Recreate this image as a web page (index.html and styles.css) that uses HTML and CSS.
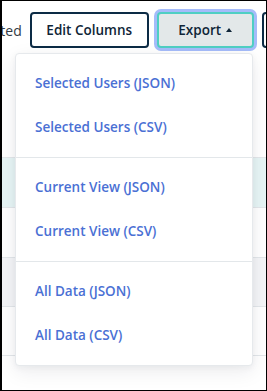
FILE: index.html
```html
<!DOCTYPE html>
<html lang="en">
<head>
<meta charset="utf-8">
<title>Export menu</title>
<link rel="stylesheet" href="styles.css">
</head>
<body>
<div class="page">
  <div class="toolbar">
    <span class="selected-count">2 Selected</span>
    <button class="btn btn-outline">Edit Columns</button>
    <button class="btn btn-export">Export <span class="caret"></span></button>
    <button class="btn btn-outline btn-next">More</button>
  </div>
  <div class="table">
    <div class="table-head"></div>
    <div class="row row-selected"></div>
    <div class="row"></div>
    <div class="row row-alt row-short"></div>
    <div class="row row-short"></div>
  </div>
  <div class="menu">
    <div class="menu-section">
      <a class="menu-item">Selected Users (JSON)</a>
      <a class="menu-item">Selected Users (CSV)</a>
    </div>
    <div class="menu-section">
      <a class="menu-item">Current View (JSON)</a>
      <a class="menu-item">Current View (CSV)</a>
    </div>
    <div class="menu-section">
      <a class="menu-item">All Data (JSON)</a>
      <a class="menu-item">All Data (CSV)</a>
    </div>
  </div>
</div>
<div class="frame"></div>
</body>
</html>
```
FILE: styles.css
```css
* { box-sizing: border-box; }
html, body {
  margin: 0;
  padding: 0;
  width: 267px;
  height: 391px;
  overflow: hidden;
  background: #fff;
  font-family: "Open Sans", "Noto Sans", sans-serif;
}
.page {
  position: relative;
  width: 267px;
  height: 391px;
  overflow: hidden;
}
.toolbar {
  display: flex;
  align-items: center;
  gap: 8px;
  margin-left: -45px;
  padding-top: 12px;
  height: 48px;
  white-space: nowrap;
}
.selected-count {
  font-size: 14px;
  color: #333b45;
  flex: none;
}
.btn {
  flex: none;
  height: 36px;
  border-radius: 4px;
  font-family: inherit;
  font-size: 13.5px;
  font-weight: 600;
  color: #0f2537;
  background: #fff;
  padding: 0 16px;
  display: flex;
  align-items: center;
  justify-content: center;
  cursor: pointer;
}
.btn-outline {
  border: 2px solid #0c2b45;
  width: 119px;
}
.btn-export {
  width: 97px;
  background: #e3e8e9;
  border: 2px solid #4fcfc3;
  box-shadow: 0 0 0 3px #a5bcfa;
  gap: 5px;
}
.caret {
  width: 0;
  height: 0;
  border-left: 3.5px solid transparent;
  border-right: 3.5px solid transparent;
  border-bottom: 4px solid #0f2537;
  margin-top: -1px;
}
.table-head {
  height: 110px;
  border-bottom: 1px solid #e3e7ea;
}
.row {
  height: 50px;
  border-bottom: 1px solid #e3e7ea;
  background: #fff;
}
.row-short { height: 49px; }
.row-selected { background: #e7f5f5; }
.row-alt { background: #f4f5f7; }

.menu {
  position: absolute;
  left: 15px;
  top: 53px;
  width: 238px;
  background: #fff;
  border: 1px solid #e6e9ec;
  border-radius: 4px;
  box-shadow: 0 6px 20px rgba(20, 30, 50, 0.08), 0 2px 6px rgba(20, 30, 50, 0.05);
  display: flex;
  flex-direction: column;
}
.menu-section {
  display: flex;
  flex-direction: column;
  padding: 7px 0 8px;
  border-bottom: 1px solid #e3e7ea;
}
.menu-section:last-child { border-bottom: none; padding-bottom: 8px; }
.menu-item {
  height: 44px;
  display: flex;
  align-items: center;
  padding-left: 19px;
  font-size: 13.5px;
  font-weight: 600;
  color: #4a70d4;
  text-decoration: none;
  cursor: pointer;
}
.frame {
  position: fixed;
  inset: 0;
  border: 1px solid #000;
  border-left-width: 2px;
  pointer-events: none;
}
```
